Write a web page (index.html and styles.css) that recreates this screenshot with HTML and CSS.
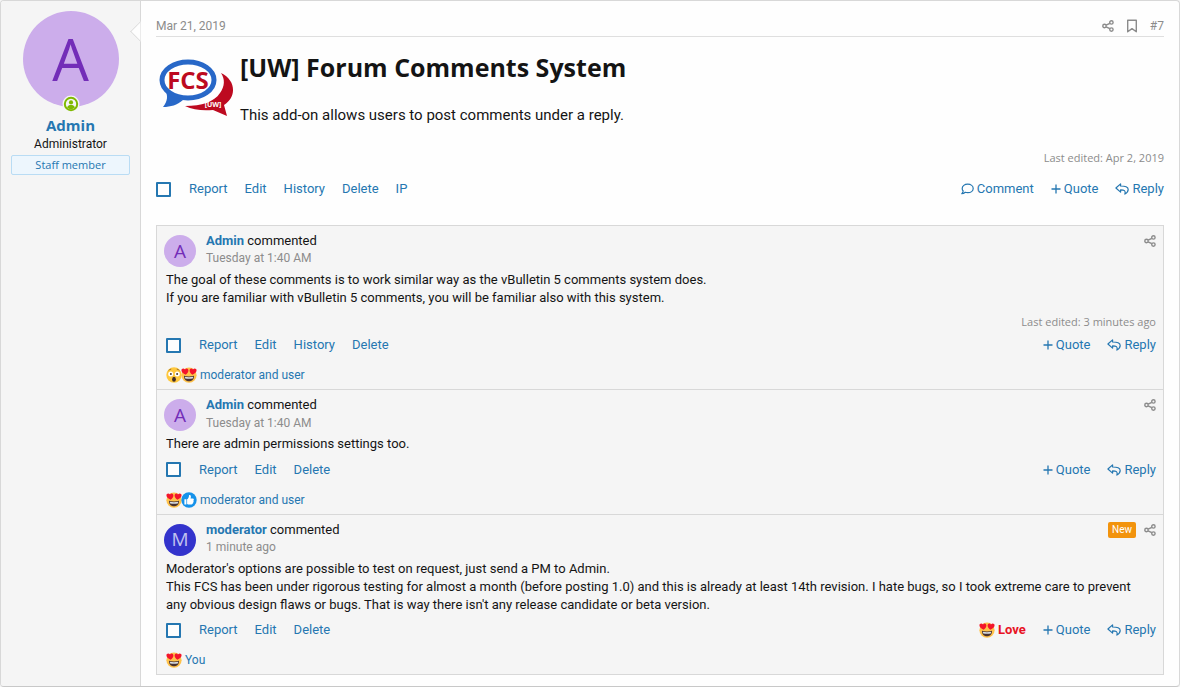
FILE: index.html
```
<!DOCTYPE html>
<html lang="en">
<head>
    <meta charset="UTF-8">
    <meta name="viewport" content="width=device-width, initial-scale=1.0">
    <title>Forum Comments System</title>
    <link rel="stylesheet" href="styles.css">
</head>
<body>
    <!-- Shared icons -->
    <svg class="sprite" aria-hidden="true">
        <symbol id="share" viewBox="0 0 12 12">
            <g fill="none" stroke="currentColor" stroke-width="1.4">
                <circle cx="2.5" cy="6" r="1.7"/>
                <circle cx="9.4" cy="2.4" r="1.7"/>
                <circle cx="9.4" cy="9.6" r="1.7"/>
                <path d="M4.1 5.2l3.7-1.9M4.1 6.8l3.7 1.9"/>
            </g>
        </symbol>
        <symbol id="bookmark" viewBox="0 0 12 14">
            <path d="M1.7 1.2h8.6v11.6L6 9.6l-4.3 3.2z" fill="none" stroke="currentColor" stroke-width="1.4" stroke-linejoin="round"/>
        </symbol>
        <symbol id="bubble" viewBox="0 0 13 12">
            <path d="M6.7 1.1c3.1 0 5.5 1.9 5.5 4.3s-2.4 4.3-5.5 4.3c-.9 0-1.7-.1-2.4-.4-1 .8-2.2 1.4-3.5 1.4.7-.7 1.3-1.6 1.4-2.7-.7-.7-1-1.6-1-2.6 0-2.4 2.4-4.3 5.5-4.3z" fill="none" stroke="currentColor" stroke-width="1.2" stroke-linejoin="round"/>
        </symbol>
        <symbol id="plus" viewBox="0 0 10 10">
            <path d="M5 .5v9M.5 5h9" fill="none" stroke="currentColor" stroke-width="1.3"/>
        </symbol>
        <symbol id="reply" viewBox="0 0 14 12">
            <path d="M5.6.9L.9 5l4.7 4.1V6.8c3.5 0 5.4.8 4.3 4.3 2.2-1.3 3.3-2.8 3.3-4.5 0-2.8-2.9-3.6-7.6-3.6z" fill="none" stroke="currentColor" stroke-width="1.2" stroke-linejoin="round"/>
        </symbol>
        <symbol id="wow" viewBox="0 0 16 16">
            <circle cx="8" cy="8" r="7.7" fill="#ffc83d"/>
            <circle cx="4.7" cy="7" r="2.5" fill="#fff"/>
            <circle cx="11.3" cy="7" r="2.5" fill="#fff"/>
            <circle cx="4.9" cy="7" r="1" fill="#4a3a30"/>
            <circle cx="11.1" cy="7" r="1" fill="#4a3a30"/>
            <path d="M2.6 3.6c.7-.9 1.5-1.4 2.6-1.5M13.4 3.6c-.7-.9-1.5-1.4-2.6-1.5" fill="none" stroke="#8a5a20" stroke-width=".8"/>
            <ellipse cx="8" cy="12.2" rx="1.9" ry="2.5" fill="#3d2a28"/>
        </symbol>
        <symbol id="love" viewBox="0 0 16 16">
            <circle cx="8" cy="8.2" r="7.6" fill="#ffc24a"/>
            <path d="M4.6 7.8C2.2 6.6 .3 5.2 .4 3.1 .5 1.5 2.7 .6 4 2.4 5.3 .9 7.5 1.7 7.4 3.7 7.3 5.3 6 6.8 4.6 7.8z" fill="#f3152b"/>
            <path d="M11.4 7.8C13.8 6.6 15.7 5.2 15.6 3.1 15.5 1.5 13.3 .6 12 2.4 10.7 .9 8.5 1.7 8.6 3.7 8.7 5.3 10 6.8 11.4 7.8z" fill="#f3152b"/>
            <path d="M3 8.7c3 .9 7 .9 10 0 .2 3.3-1.8 5.5-5 5.5s-5.2-2.2-5-5.5z" fill="#49322f"/>
            <path d="M3.8 9.7c2.7.6 5.7.6 8.4 0 0 .8-.2 1.3-.5 1.8-2.3.4-5.1.4-7.4 0-.3-.5-.5-1-.5-1.8z" fill="#d8dde2"/>
        </symbol>
        <symbol id="like" viewBox="0 0 16 16">
            <circle cx="8" cy="8" r="7.7" fill="#1592ea"/>
            <path d="M3.4 7.3h2v5.2h-2zM6.1 7.3c1.3-.9 1.8-2 1.9-3.9.1-.8 1.8-.5 1.9 1 0 .8-.2 1.5-.4 2.2h2.3c1.2 0 1.4 1.3.6 1.8.5.5.4 1.2-.2 1.5.3.5.1 1.2-.5 1.4.1.7-.3 1.2-1.2 1.2H8.3c-.9 0-1.5-.3-2.2-.6z" fill="#fff"/>
        </symbol>
    </svg>

    <article class="post">
        <!-- User info -->
        <aside class="user">
            <div class="avatar-wrap">
                <div class="avatar avatar-large">A</div>
                <svg class="online" viewBox="0 0 18 18" role="img" aria-label="Online now">
                    <circle cx="9" cy="9" r="8.5" fill="#f5f5f5"/>
                    <circle cx="9" cy="9" r="7.2" fill="#7fb900"/>
                    <circle cx="9" cy="9" r="5.2" fill="#f5f5f5"/>
                    <circle cx="9" cy="7.4" r="2.1" fill="#7fb900"/>
                    <path d="M5.1 12.5c.6-2 2.2-2.5 3.9-2.5s3.3.5 3.9 2.5A5.2 5.2 0 0 1 9 14.2a5.2 5.2 0 0 1-3.9-1.7z" fill="#7fb900"/>
                </svg>
            </div>
            <a href="#" class="user-name">Admin</a>
            <div class="user-title">Administrator</div>
            <div class="user-banner">Staff member</div>
        </aside>

        <!-- Post content -->
        <div class="main">
            <header class="post-header">
                <a href="#" class="muted">Mar 21, 2019</a>
                <div class="post-tools">
                    <a href="#" class="muted" aria-label="Share"><svg class="icon-share"><use href="#share"/></svg></a>
                    <a href="#" class="muted" aria-label="Bookmark"><svg class="icon-bookmark"><use href="#bookmark"/></svg></a>
                    <a href="#" class="muted">#7</a>
                </div>
            </header>

            <div class="post-body">
                <svg class="logo" viewBox="0 0 80 80" role="img" aria-label="FCS logo">
                    <path d="M65 23c8 4 12 10 12 17 0 6-3 11-9 15l3 11-14-6c-10 1-20 0-28-4 17 0 29-4 35-13 5-7 5-14 1-20z" fill="#bd0a20"/>
                    <path d="M9 40c3 5 3 11-2 17 8 0 14-2 20-7z" fill="#2868c8"/>
                    <ellipse cx="32" cy="30" rx="26" ry="18" fill="#fff" stroke="#2868c8" stroke-width="5"/>
                    <text x="32" y="39" text-anchor="middle" class="logo-text">FCS</text>
                    <text x="57" y="57" text-anchor="middle" class="logo-sub">[UW]</text>
                </svg>
                <div>
                    <h1>[UW] Forum Comments System</h1>
                    <p>This add-on allows users to post comments under a reply.</p>
                </div>
            </div>
            <div class="last-edit">Last edited: Apr 2, 2019</div>

            <div class="actions">
                <div class="actions-left">
                    <input type="checkbox" aria-label="Select post">
                    <a href="#">Report</a>
                    <a href="#">Edit</a>
                    <a href="#">History</a>
                    <a href="#">Delete</a>
                    <a href="#">IP</a>
                </div>
                <div class="actions-right">
                    <a href="#"><svg class="icon-bubble"><use href="#bubble"/></svg>Comment</a>
                    <a href="#"><svg class="icon-plus"><use href="#plus"/></svg>Quote</a>
                    <a href="#"><svg class="icon-reply"><use href="#reply"/></svg>Reply</a>
                </div>
            </div>

            <!-- Comments -->
            <section class="comments">
                <article class="comment">
                    <header class="comment-header">
                        <div class="avatar">A</div>
                        <div class="comment-info">
                            <div><a href="#" class="comment-name">Admin</a> commented</div>
                            <a href="#" class="muted">Tuesday at 1:40 AM</a>
                        </div>
                        <div class="comment-tools">
                            <a href="#" class="muted" aria-label="Share"><svg class="icon-share"><use href="#share"/></svg></a>
                        </div>
                    </header>
                    <div class="comment-text">The goal of these comments is to work similar way as the vBulletin 5 comments system does.<br>If you are familiar with vBulletin 5 comments, you will be familiar also with this system.</div>
                    <div class="last-edit">Last edited: 3 minutes ago</div>
                    <div class="actions">
                        <div class="actions-left">
                            <input type="checkbox" aria-label="Select comment">
                            <a href="#">Report</a>
                            <a href="#">Edit</a>
                            <a href="#">History</a>
                            <a href="#">Delete</a>
                        </div>
                        <div class="actions-right">
                            <a href="#"><svg class="icon-plus"><use href="#plus"/></svg>Quote</a>
                            <a href="#"><svg class="icon-reply"><use href="#reply"/></svg>Reply</a>
                        </div>
                    </div>
                    <div class="reactions">
                        <svg class="emoji"><use href="#wow"/></svg><svg class="emoji"><use href="#love"/></svg>
                        <a href="#">moderator and user</a>
                    </div>
                </article>

                <article class="comment">
                    <header class="comment-header">
                        <div class="avatar">A</div>
                        <div class="comment-info">
                            <div><a href="#" class="comment-name">Admin</a> commented</div>
                            <a href="#" class="muted">Tuesday at 1:40 AM</a>
                        </div>
                        <div class="comment-tools">
                            <a href="#" class="muted" aria-label="Share"><svg class="icon-share"><use href="#share"/></svg></a>
                        </div>
                    </header>
                    <div class="comment-text">There are admin permissions settings too.</div>
                    <div class="actions">
                        <div class="actions-left">
                            <input type="checkbox" aria-label="Select comment">
                            <a href="#">Report</a>
                            <a href="#">Edit</a>
                            <a href="#">Delete</a>
                        </div>
                        <div class="actions-right">
                            <a href="#"><svg class="icon-plus"><use href="#plus"/></svg>Quote</a>
                            <a href="#"><svg class="icon-reply"><use href="#reply"/></svg>Reply</a>
                        </div>
                    </div>
                    <div class="reactions">
                        <svg class="emoji"><use href="#love"/></svg><svg class="emoji"><use href="#like"/></svg>
                        <a href="#">moderator and user</a>
                    </div>
                </article>

                <article class="comment">
                    <header class="comment-header">
                        <div class="avatar avatar-blue">M</div>
                        <div class="comment-info">
                            <div><a href="#" class="comment-name">moderator</a> commented</div>
                            <a href="#" class="muted">1 minute ago</a>
                        </div>
                        <div class="comment-tools">
                            <span class="new">New</span>
                            <a href="#" class="muted" aria-label="Share"><svg class="icon-share"><use href="#share"/></svg></a>
                        </div>
                    </header>
                    <div class="comment-text">Moderator's options are possible to test on request, just send a PM to Admin.<br>This FCS has been under rigorous testing for almost a month (before posting 1.0) and this is already at least 14th revision. I hate bugs, so I took extreme care to prevent any obvious design flaws or bugs. That is way there isn't any release candidate or beta version.</div>
                    <div class="actions">
                        <div class="actions-left">
                            <input type="checkbox" aria-label="Select comment">
                            <a href="#">Report</a>
                            <a href="#">Edit</a>
                            <a href="#">Delete</a>
                        </div>
                        <div class="actions-right">
                            <a href="#" class="loved"><svg class="emoji"><use href="#love"/></svg>Love</a>
                            <a href="#"><svg class="icon-plus"><use href="#plus"/></svg>Quote</a>
                            <a href="#"><svg class="icon-reply"><use href="#reply"/></svg>Reply</a>
                        </div>
                    </div>
                    <div class="reactions">
                        <svg class="emoji"><use href="#love"/></svg>
                        <a href="#">You</a>
                    </div>
                </article>
            </section>
        </div>
    </article>
</body>
</html>
```
FILE: styles.css
```
/* General Styling */
* {
    box-sizing: border-box;
}

body {
    font-family: Roboto, "Open Sans", sans-serif;
    font-size: 13px;
    line-height: 1.4;
    margin: 0;
    background-color: #f5f5f5;
    color: #141414;
}

a {
    color: #2577b1;
    text-decoration: none;
}

svg {
    display: block;
    flex: none;
}

.sprite {
    position: absolute;
    width: 0;
    height: 0;
}

.muted {
    color: #8c8c8c;
    font-size: 12px;
}

.post {
    display: flex;
    min-height: 100vh;
    border: 1px solid #d8d8d8;
    border-bottom-color: #c8c8c8;
    border-radius: 4px;
    background-color: #fefefe;
}

/* User column */
.user {
    flex: none;
    width: 140px;
    padding: 10px;
    text-align: center;
    background-color: #f5f5f5;
    border-right: 1px solid #d8d8d8;
    border-radius: 3px 0 0 3px;
}

.avatar-wrap {
    position: relative;
    display: flex;
    justify-content: center;
    margin-bottom: 7px;
}

.avatar {
    display: flex;
    flex: none;
    justify-content: center;
    align-items: center;
    width: 32px;
    height: 32px;
    border-radius: 50%;
    font-family: "Open Sans", sans-serif;
    font-size: 19px;
    line-height: 1;
    color: #732db8;
    background-color: #ccadeb;
}

.avatar-large {
    width: 96px;
    height: 96px;
    font-size: 58px;
}

.avatar-blue {
    color: #c2c2f0;
    background-color: #3333cc;
}

.online {
    position: absolute;
    bottom: -6px;
    left: 50%;
    width: 18px;
    height: 18px;
    transform: translateX(-50%);
}

.user-name {
    display: block;
    font-family: "Open Sans", sans-serif;
    font-size: 15px;
    line-height: 22px;
    font-weight: bold;
}

.user-title {
    font-size: 12px;
    line-height: 17px;
}

.user-banner {
    margin-top: 2px;
    font-family: "Open Sans", sans-serif;
    font-size: 11px;
    line-height: 18px;
    color: #2577b1;
    background-color: #edf6fd;
    border: 1px solid #b9dcf4;
    border-radius: 2px;
}

/* Main column */
.main {
    position: relative;
    flex: 1;
    min-width: 0;
    padding: 15px 15px 10px;
}

/* Arrow pointing at the user */
.main::before {
    content: "";
    position: absolute;
    top: 23px;
    left: -8px;
    width: 14px;
    height: 14px;
    background-color: #fefefe;
    border: 1px solid #d8d8d8;
    border-top: 0;
    border-right: 0;
    transform: rotate(45deg);
    clip-path: polygon(0 0, 100% 100%, 0 100%);
}

.post-header {
    display: flex;
    justify-content: space-between;
    align-items: center;
    height: 21px;
    border-bottom: 1px solid #dfdfdf;
}

.post-tools {
    display: flex;
    align-items: center;
    gap: 12px;
}

.post-body {
    display: flex;
    gap: 4px;
    margin-top: 13px;
}

.logo {
    width: 80px;
    height: 80px;
    font-family: "Open Sans", sans-serif;
}

.logo-text {
    font-size: 24px;
    font-weight: bold;
    fill: #bd0a20;
}

.logo-sub {
    font-size: 7px;
    font-weight: bold;
    fill: #fff;
}

h1 {
    margin: 0;
    font-family: "Open Sans", sans-serif;
    font-size: 25px;
    line-height: 34px;
}

.post-body p {
    margin: 19px 0 0;
    font-size: 15px;
    line-height: 24px;
}

.last-edit {
    margin-top: 20px;
    font-family: "Open Sans", sans-serif;
    font-size: 11px;
    line-height: 16px;
    text-align: right;
    color: #8c8c8c;
}

.actions {
    display: flex;
    justify-content: space-between;
    align-items: center;
    margin-top: 13px;
    line-height: 20px;
}

.actions-left,
.actions-right {
    display: flex;
    align-items: center;
    gap: 17px;
}

.actions-right a {
    display: flex;
    align-items: center;
    gap: 3px;
}

input[type="checkbox"] {
    appearance: none;
    width: 15px;
    height: 15px;
    margin: 0 1px 0 0;
    background-color: #fefefe;
    border: 2px solid #2577b1;
    border-radius: 1px;
}

/* Comments */
.comments {
    margin-top: 26px;
    border: 1px solid #d8d8d8;
    background-color: #f5f5f5;
}

.comment {
    padding: 9px 7px 4px;
}

.comment + .comment {
    border-top: 1px solid #d8d8d8;
}

.comment-header {
    display: flex;
    gap: 10px;
}

.comment-info {
    flex: 1;
    display: flex;
    flex-direction: column;
    margin-top: -3px;
}

.comment-name {
    font-weight: bold;
}

.comment-tools {
    display: flex;
    align-items: center;
    gap: 8px;
    height: 12px;
}

.new {
    padding: 0 4px;
    font-size: 10px;
    line-height: 16px;
    color: #fff;
    background-color: #f2930d;
    border-radius: 2px;
}

.comment-text {
    margin-top: 4px;
    padding: 0 2px;
}

.comment .last-edit {
    margin-top: 7px;
}

.comment .actions {
    margin-top: 6px;
    padding-left: 2px;
}

.comment .last-edit + .actions {
    margin-top: 5px;
}

.reactions {
    display: flex;
    align-items: center;
    margin-top: 10px;
    padding-left: 2px;
    font-size: 12px;
    line-height: 20px;
}

.reactions a {
    margin-left: 3px;
}

.reactions .emoji + .emoji {
    margin-left: -1px;
}

.actions-right .loved {
    font-weight: bold;
    color: #e81224;
}

/* Icon sizes */
.icon-share {
    width: 12px;
    height: 12px;
}

.icon-bookmark {
    width: 12px;
    height: 14px;
}

.icon-bubble {
    width: 13px;
    height: 12px;
}

.icon-plus {
    width: 10px;
    height: 10px;
}

.icon-reply {
    width: 14px;
    height: 12px;
}

.emoji {
    width: 16px;
    height: 16px;
}
```
